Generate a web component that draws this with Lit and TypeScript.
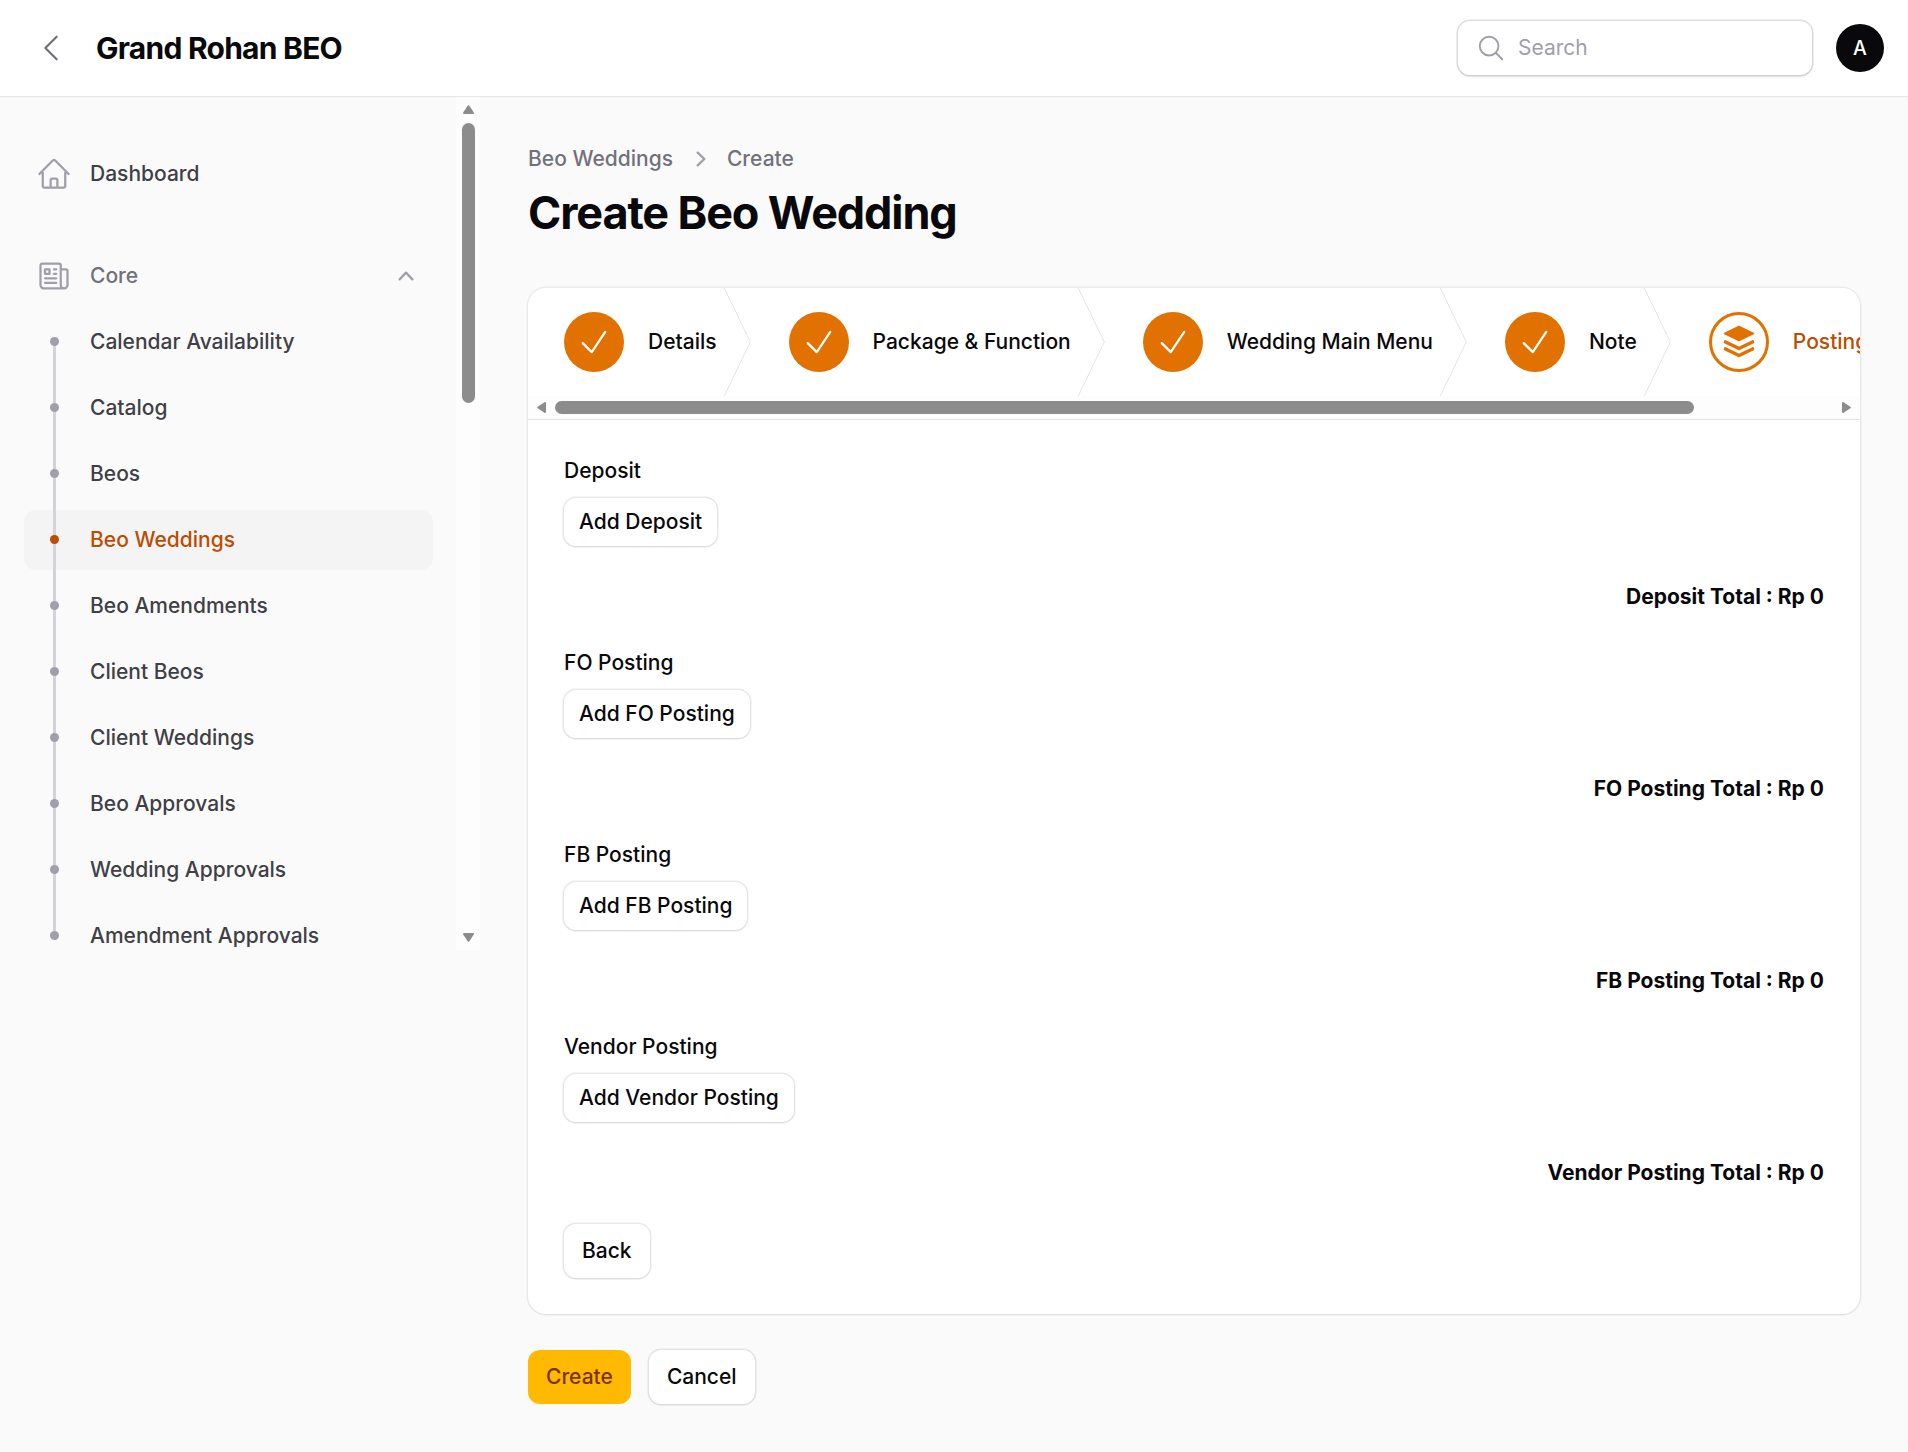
import { LitElement, css, html, svg } from "lit";
import { customElement } from "lit/decorators.js";

const outline = (d: string, cls = "") => html`
    <svg class=${cls} viewBox="0 0 24 24" fill="none" stroke="currentColor" stroke-width="1.5" stroke-linecap="round" stroke-linejoin="round">
        ${svg`<path d=${d}></path>`}
    </svg>
`;

const solid = (d: string, cls = "") => html`
    <svg class=${cls} viewBox="0 0 20 20" fill="currentColor">${svg`<path d=${d}></path>`}</svg>
`;

const ICONS = {
    back: "M15.75 19.5 8.25 12l7.5-7.5",
    search: "m21 21-5.197-5.197m0 0A7.5 7.5 0 1 0 5.196 5.196a7.5 7.5 0 0 0 10.607 10.607Z",
    home: "m2.25 12 8.954-8.955c.44-.439 1.152-.439 1.591 0L21.75 12M4.5 9.75v10.125c0 .621.504 1.125 1.125 1.125H9.75v-4.875c0-.621.504-1.125 1.125-1.125h2.25c.621 0 1.125.504 1.125 1.125V21h4.125c.621 0 1.125-.504 1.125-1.125V9.75M8.25 21h8.25",
    news: "M12 7.5h1.5m-1.5 3h1.5m-7.5 3h7.5m-7.5 3h7.5m3-9h3.375c.621 0 1.125.504 1.125 1.125V18a2.25 2.25 0 0 1-2.25 2.25M16.5 7.5V18a2.25 2.25 0 0 0 2.25 2.25M16.5 7.5V4.875c0-.621-.504-1.125-1.125-1.125H4.125C3.504 3.75 3 4.254 3 4.875V18a2.25 2.25 0 0 0 2.25 2.25h13.5M6 7.5h3v3H6v-3Z",
    check: "m4.5 12.75 6 6 9-13.5",
    chevronUp: "M14.77 12.79a.75.75 0 0 1-1.06-.02L10 8.832 6.29 12.77a.75.75 0 1 1-1.08-1.04l4.25-4.5a.75.75 0 0 1 1.08 0l4.25 4.5a.75.75 0 0 1-.02 1.06Z",
    chevronRight: "M7.21 14.77a.75.75 0 0 1 .02-1.06L11.168 10 7.23 6.29a.75.75 0 1 1 1.04-1.08l4.5 4.25a.75.75 0 0 1 0 1.08l-4.5 4.25a.75.75 0 0 1-1.06-.02Z",
};

const CORE_ITEMS = [
    "Calendar Availability",
    "Catalog",
    "Beos",
    "Beo Weddings",
    "Beo Amendments",
    "Client Beos",
    "Client Weddings",
    "Beo Approvals",
    "Wedding Approvals",
    "Amendment Approvals",
];

const STEPS = ["Details", "Package & Function", "Wedding Main Menu", "Note"];

const POSTINGS = ["Deposit", "FO Posting", "FB Posting", "Vendor Posting"];

const arrow = (dir: "up" | "down" | "left" | "right") => {
    const points = {
        up: "1,8 10,8 5.5,1.2",
        down: "1,1 10,1 5.5,7.8",
        left: "8,1 8,10 1.2,5.5",
        right: "1,1 1,10 7.8,5.5",
    }[dir];
    const wide = dir === "up" || dir === "down";
    return html`
        <svg class=${wide ? "arrow wide" : "arrow tall"} viewBox=${wide ? "0 0 11 9" : "0 0 9 11"}>
            ${svg`<polygon points=${points} fill="#8c8c8c" stroke="#8c8c8c" stroke-width="2" stroke-linejoin="round"></polygon>`}
        </svg>
    `;
};

@customElement("app-root")
export class AppRoot extends LitElement {
    renderTopbar() {
        return html`
            <header class="topbar">
                <button class="back-btn">${outline(ICONS.back, "icon-36")}</button>
                <div class="brand">Grand Rohan BEO</div>
                <div class="search">
                    ${outline(ICONS.search, "icon-30")}
                    <span>Search</span>
                </div>
                <div class="avatar">A</div>
            </header>
        `;
    }

    renderSidebar() {
        return html`
            <aside class="sidebar">
                <nav class="nav">
                    <div class="nav-item">
                        ${outline(ICONS.home, "icon-36 nav-icon")}
                        <span>Dashboard</span>
                    </div>
                    <div class="group">
                        <div class="nav-item group-label">
                            ${outline(ICONS.news, "icon-36 nav-icon")}
                            <span>Core</span>
                            ${solid(ICONS.chevronUp, "icon-30 group-toggle")}
                        </div>
                        <ul class="sub-list">
                            ${CORE_ITEMS.map(
                                (item) => html`
                                    <li class=${item === "Beo Weddings" ? "sub-item active" : "sub-item"}>
                                        <span class="dot"></span>
                                        <span>${item}</span>
                                    </li>
                                `
                            )}
                        </ul>
                    </div>
                </nav>
                <div class="side-scroll">
                    ${arrow("up")}
                    <div class="side-thumb"></div>
                    <div class="side-spacer"></div>
                    ${arrow("down")}
                </div>
            </aside>
        `;
    }

    renderSteps() {
        return html`
            <ol class="steps">
                ${STEPS.map(
                    (step) => html`
                        <li class="step">
                            <span class="step-circle">${outline(ICONS.check, "icon-36")}</span>
                            <span class="step-label">${step}</span>
                            <svg class="step-sep" viewBox="0 0 22 80" fill="none" preserveAspectRatio="none">
                                <path d="M0 -2L20 40L0 82" stroke="currentColor" stroke-width="1" stroke-linejoin="round" vector-effect="non-scaling-stroke"></path>
                            </svg>
                        </li>
                    `
                )}
                <li class="step current">
                    <span class="step-circle outlined">
                        <svg class="icon-36" viewBox="0 0 36 36">
                            <polygon points="18,2.5 32.5,9.5 18,16.5 3.5,9.5" fill="currentColor" stroke="currentColor" stroke-width="1.5" stroke-linejoin="round"></polygon>
                            <polyline points="4.5,18 18,24.5 31.5,18" fill="none" stroke="currentColor" stroke-width="3.6" stroke-linecap="round" stroke-linejoin="round"></polyline>
                            <polyline points="4.5,25 18,31.5 31.5,25" fill="none" stroke="currentColor" stroke-width="3.6" stroke-linecap="round" stroke-linejoin="round"></polyline>
                        </svg>
                    </span>
                    <span class="step-label">Posting</span>
                </li>
            </ol>
            <div class="steps-scroll">
                ${arrow("left")}
                <div class="steps-thumb"></div>
                ${arrow("right")}
            </div>
        `;
    }

    renderPosting(name: string) {
        return html`
            <section class="posting">
                <div class="posting-label">${name}</div>
                <button class="btn add">Add ${name}</button>
            </section>
            <div class="posting-total">${name} Total : Rp 0</div>
        `;
    }

    render() {
        return html`
            ${this.renderTopbar()}
            <div class="layout">
                ${this.renderSidebar()}
                <main class="main">
                    <div class="breadcrumbs">
                        <span>Beo Weddings</span>
                        ${solid(ICONS.chevronRight, "icon-30 crumb-sep")}
                        <span>Create</span>
                    </div>
                    <h1>Create Beo Wedding</h1>
                    <div class="card">
                        ${this.renderSteps()}
                        <div class="card-body">
                            ${POSTINGS.map((name) => this.renderPosting(name))}
                            <div class="form-back"><button class="btn tall">Back</button></div>
                        </div>
                    </div>
                    <div class="actions">
                        <button class="btn tall primary">Create</button>
                        <button class="btn tall">Cancel</button>
                    </div>
                </main>
            </div>
        `;
    }

    static styles = css`
        :host {
            display: block;
            min-height: 1452px;
            background: #fafafa;
            color: #09090b;
            font-family: Inter, "Liberation Sans", sans-serif;
            font-size: 21px;
            line-height: 30px;
        }

        * {
            box-sizing: border-box;
        }

        svg {
            display: block;
            flex: none;
        }

        .icon-36 {
            width: 36px;
            height: 36px;
        }

        .icon-30 {
            width: 30px;
            height: 30px;
        }

        .topbar {
            display: flex;
            align-items: center;
            height: 96px;
            padding: 0 24px 0 21px;
            background: #fff;
            box-shadow: 0 1px 2px rgba(0, 0, 0, 0.05), 0 1px 0 rgba(9, 9, 11, 0.05);
            position: relative;
        }

        .back-btn {
            display: flex;
            align-items: center;
            justify-content: center;
            width: 60px;
            height: 60px;
            margin-right: 15px;
            padding: 0;
            border: 0;
            background: none;
            color: #71717b;
        }

        .brand {
            flex: 1;
            font-size: 30px;
            line-height: 36px;
            font-weight: 700;
            letter-spacing: -0.025em;
        }

        .search {
            display: flex;
            align-items: center;
            gap: 12px;
            width: 354px;
            height: 54px;
            margin-right: 24px;
            padding: 0 18px;
            background: #fff;
            border-radius: 12px;
            box-shadow: 0 0 0 1.5px rgba(9, 9, 11, 0.13), 0 2px 3px rgba(0, 0, 0, 0.08);
            color: #9f9fa9;
        }

        .avatar {
            display: flex;
            align-items: center;
            justify-content: center;
            width: 48px;
            height: 48px;
            border-radius: 50%;
            background: #09090b;
            color: #fff;
            font-size: 19.5px;
            font-weight: 500;
        }

        .layout {
            display: grid;
            grid-template-columns: 480px 1fr;
            align-items: start;
        }

        .sidebar {
            display: flex;
            height: 854px;
            overflow: hidden;
        }

        .nav {
            flex: 1;
            min-width: 0;
            padding: 48px 23px 0 24px;
        }

        .nav-item {
            display: flex;
            align-items: center;
            gap: 18px;
            height: 60px;
            padding: 0 12px;
            font-weight: 500;
            color: #3f3f46;
        }

        .nav-icon {
            color: #9f9fa9;
        }

        .group {
            margin-top: 42px;
        }

        .group-label {
            color: #71717b;
        }

        .group-label span {
            flex: 1;
        }

        .group-toggle {
            color: #9f9fa9;
        }

        .sub-list {
            display: flex;
            flex-direction: column;
            gap: 6px;
            margin: 6px 0 0;
            padding: 0;
            list-style: none;
        }

        .sub-item {
            position: relative;
            display: flex;
            align-items: center;
            height: 60px;
            padding-left: 66px;
            border-radius: 12px;
            font-weight: 500;
            color: #3f3f46;
        }

        .sub-item::before {
            content: "";
            position: absolute;
            left: 29px;
            top: -6px;
            bottom: 0;
            width: 3px;
            background: #d4d4d8;
        }

        .sub-item:first-child::before {
            top: 30px;
        }

        .sub-item:last-child::before {
            bottom: 30px;
        }

        .dot {
            position: absolute;
            left: 26px;
            top: 25px;
            width: 9px;
            height: 9px;
            border-radius: 50%;
            background: #9f9fa9;
        }

        .sub-item.active {
            background: #f4f4f5;
            color: #bb4d00;
        }

        .sub-item.active .dot {
            background: #bb4d00;
        }

        .side-scroll {
            display: flex;
            flex-direction: column;
            align-items: center;
            width: 24px;
            padding: 9px 0 8px;
            background: #fdfdfd;
        }

        .arrow.wide {
            width: 11px;
            height: 9px;
        }

        .arrow.tall {
            width: 9px;
            height: 11px;
        }

        .side-thumb {
            width: 13px;
            height: 280px;
            margin-top: 9px;
            border-radius: 7px;
            background: #8c8c8c;
        }

        .side-spacer {
            flex: 1;
        }

        .main {
            min-width: 0;
            padding: 48px;
        }

        .breadcrumbs {
            display: flex;
            align-items: center;
            gap: 12px;
            font-weight: 500;
            color: #71717b;
        }

        .crumb-sep {
            margin: 0 -1.5px 0 1.5px;
            color: #9f9fa9;
        }

        h1 {
            margin: 12px 0 48px;
            font-size: 45px;
            line-height: 54px;
            font-weight: 700;
            letter-spacing: -0.025em;
        }

        .card {
            background: #fff;
            border-radius: 18px;
            box-shadow: 0 0 0 1.5px rgba(9, 9, 11, 0.06), 0 1px 2px rgba(0, 0, 0, 0.05);
            overflow: hidden;
        }

        .steps {
            display: flex;
            height: 108px;
            margin: 0;
            padding: 0;
            list-style: none;
            overflow: hidden;
        }

        .step {
            position: relative;
            display: flex;
            flex: none;
            align-items: center;
            gap: 24px;
            padding: 0 36px;
            font-weight: 500;
        }

        .step-label {
            white-space: nowrap;
        }

        .step-circle {
            display: flex;
            align-items: center;
            justify-content: center;
            width: 60px;
            height: 60px;
            border-radius: 50%;
            background: #e17100;
            color: #fff;
        }

        .step-circle.outlined {
            background: none;
            border: 3px solid #e17100;
            color: #e17100;
        }

        .step.current .step-label {
            color: #bb4d00;
        }

        .step-sep {
            position: absolute;
            top: 0;
            right: 0;
            width: 30px;
            height: 100%;
            color: #e4e4e7;
        }

        .steps-scroll {
            display: flex;
            align-items: center;
            justify-content: space-between;
            height: 24px;
            padding: 0 9px;
            background: #fdfdfd;
            border-bottom: 1px solid #e4e4e7;
        }

        .steps-thumb {
            width: 1139px;
            height: 13px;
            margin: 0 auto 0 9px;
            border-radius: 7px;
            background: #8c8c8c;
        }

        .card-body {
            display: flex;
            flex-direction: column;
            gap: 36px;
            padding: 36px;
        }

        .posting {
            display: flex;
            flex-direction: column;
            align-items: flex-start;
            gap: 12px;
        }

        .posting-label {
            font-weight: 500;
        }

        .posting-total {
            text-align: right;
            font-weight: 700;
        }

        .form-back {
            display: flex;
        }

        .btn {
            height: 48px;
            padding: 0 18px;
            border: 0;
            border-radius: 12px;
            background: #fff;
            box-shadow: 0 0 0 1.5px rgba(9, 9, 11, 0.09), 0 1px 2px rgba(0, 0, 0, 0.05);
            color: #09090b;
            font: 500 21px/30px Inter, "Liberation Sans", sans-serif;
        }

        .btn.add {
            padding: 0 15px;
        }

        .btn.tall {
            height: 54px;
        }

        .btn.primary {
            background: #ffb900;
            box-shadow: none;
            color: #7b3306;
        }

        .actions {
            display: flex;
            gap: 18px;
            margin-top: 36px;
        }
    `;
}
